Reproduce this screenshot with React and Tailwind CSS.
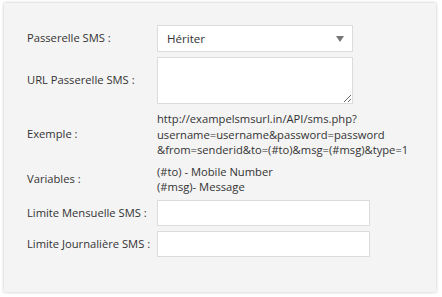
import React from "react";

function Row({ label, children, className = "" }) {
  return (
    <div className={"flex items-center " + className}>
      <div className="w-[130px] shrink-0 whitespace-nowrap">{label}</div>
      <div className="whitespace-nowrap">{children}</div>
    </div>
  );
}

export default function App() {
  return (
    <div className="w-[442px] h-[297px] bg-white pt-[3px] pl-[4px] font-['Open_Sans',sans-serif] text-[11.2px] text-[#333]">
      <div className="w-[432px] h-[289px] bg-[#f4f4f4] shadow-[0_0_3px_rgba(0,0,0,0.25)] pt-[22px] pl-[23px]">
        <div className="flex flex-col">
          <Row label="Passerelle SMS :">
            <div className="w-[196px] h-[27px] bg-white border border-[#dcdcdc] flex items-center justify-between pl-[9px] pr-[8px] text-[11.6px]">
              <span>Hériter</span>
              <svg width="8" height="6" viewBox="0 0 8 6">
                <polygon points="0,0 8,0 4,6" fill="#777" />
              </svg>
            </div>
          </Row>
          <Row label="URL Passerelle SMS :" className="mt-[5px]">
            <textarea className="block w-[196px] h-[47px] bg-white border border-[#dcdcdc] outline-none" />
          </Row>
          <Row label="Exemple :" className="mt-[7px]">
            <div className="leading-[15.6px]">
              http://exampelsmsurl.in/API/sms.php?
              <br />
              username=username&amp;password=password
              <br />
              &amp;from=senderid&amp;to=(#to)&amp;msg=(#msg)&amp;type=1
            </div>
          </Row>
          <Row label="Variables :" className="mt-[6px]">
            <div className="leading-[15.6px]">
              (#to) - Mobile Number
              <br />
              (#msg)- Message
            </div>
          </Row>
          <Row label="Limite Mensuelle SMS :" className="mt-[5px]">
            <input className="block w-[213px] h-[26px] bg-white border border-[#dcdcdc] outline-none" />
          </Row>
          <Row label="Limite Journalière SMS :" className="mt-[5px]">
            <input className="block w-[213px] h-[26px] bg-white border border-[#dcdcdc] outline-none" />
          </Row>
        </div>
      </div>
    </div>
  );
}
